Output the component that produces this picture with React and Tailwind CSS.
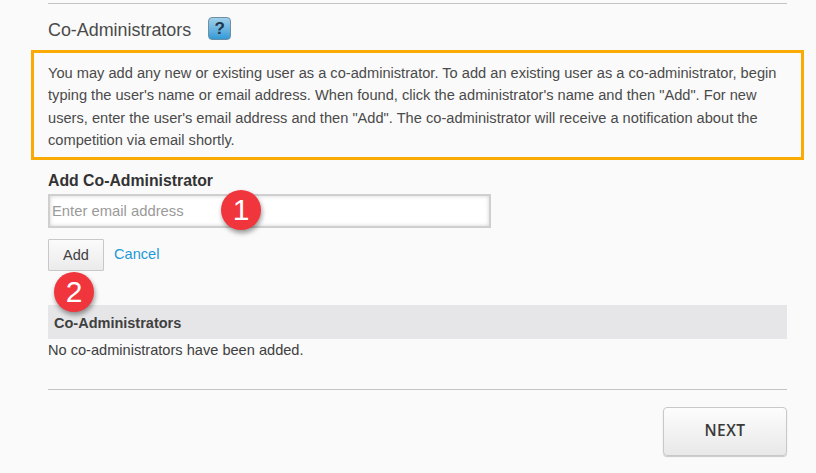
import React from "react"

function Badge({ n, className }) {
  return (
    <div className={`absolute w-10 h-10 rounded-full bg-[#f1353d] text-white text-[30px] leading-10 text-center shadow-[1px_3px_5px_rgba(0,0,0,0.4)] ${className}`}>
      {n}
    </div>
  )
}

export default function App() {
  return (
    <div className="w-[816px] h-[473px] overflow-hidden bg-[#fafafa] text-[#404040] font-['Liberation_Sans',Arial,sans-serif] pt-[3px]">
      <div className="mx-12 w-[739px] h-px bg-[#c4c4c4]" />

      <div className="flex items-start h-[46px] pl-12">
        <h2 className="mt-[18px] text-[17.9px] leading-none text-[#4a4a4a]">Co-Administrators</h2>
        <div className="mt-[13px] ml-[17px] w-[23px] h-[23px] rounded-[4px] border border-[#6d8ea3] bg-gradient-to-b from-[#9fd0ea] to-[#2f9ad6] flex items-center justify-center text-[17px] font-bold text-[#22364a]">
          ?
        </div>
      </div>

      <div className="ml-[31px] w-[773px] h-[110px] border-[3px] border-[#f9ab03] pl-[14px] pt-[9px] text-[14.63px] leading-[22.4px] text-[#4a4a4a]">
        <p className="whitespace-nowrap">
          You may add any new or existing user as a co-administrator. To add an existing user as a co-administrator, begin
          <br />
          typing the user's name or email address. When found, click the administrator's name and then "Add". For new
          <br />
          users, enter the user's email address and then "Add". The co-administrator will receive a notification about the
          <br />
          competition via email shortly.
        </p>
      </div>

      <div className="relative pl-12">
        <label className="block mt-[12px] text-[15.8px] leading-[18px] font-bold text-[#333]">Add Co-Administrator</label>
        <input
          placeholder="Enter email address"
          className="block mt-[4px] w-[443px] h-[34px] border-2 border-[#cfcfcf] bg-white px-[2px] text-[14.8px] shadow-[inset_0_0_4px_rgba(0,0,0,0.18)] outline-none placeholder:text-[#9a9a9a]"
        />
        <div className="flex items-center mt-[11px]">
          <button className="w-[56px] h-[32px] border border-[#c8c8c8] rounded-[1px] bg-gradient-to-b from-[#fbfbfb] to-[#ebebeb] pt-[2px] text-[14.5px] text-[#404040]">
            Add
          </button>
          <a className="ml-[10px] -mt-[1px] text-[14.6px] text-[#1d98d6]">Cancel</a>
        </div>

        <div className="mt-[34px] w-[739px] h-[34px] bg-[#e6e6e8] pl-[6px] pt-[9px] text-[14.5px] leading-[18px] font-bold text-[#404040]">
          Co-Administrators
        </div>
        <p className="mt-[2px] text-[14.6px] leading-[18px] text-[#404040]">No co-administrators have been added.</p>

        <Badge n="1" className="left-[221px] top-[18px]" />
        <Badge n="2" className="left-[54px] top-[100px]" />

        <div className="mt-[30px] w-[739px] h-px bg-[#c4c4c4]" />
        <div className="flex justify-end w-[739px] mt-[17px]">
          <button className="w-[124px] h-[49px] border border-[#c8c8c8] rounded-[4px] bg-gradient-to-b from-[#fdfdfd] to-[#e8e8e8] shadow-[0_1px_1px_rgba(0,0,0,0.2)] pb-[2px] text-[15.5px] tracking-[0.5px] font-['Open_Sans',sans-serif] font-semibold text-[#3a3a3a]">
            NEXT
          </button>
        </div>
      </div>
    </div>
  )
}
